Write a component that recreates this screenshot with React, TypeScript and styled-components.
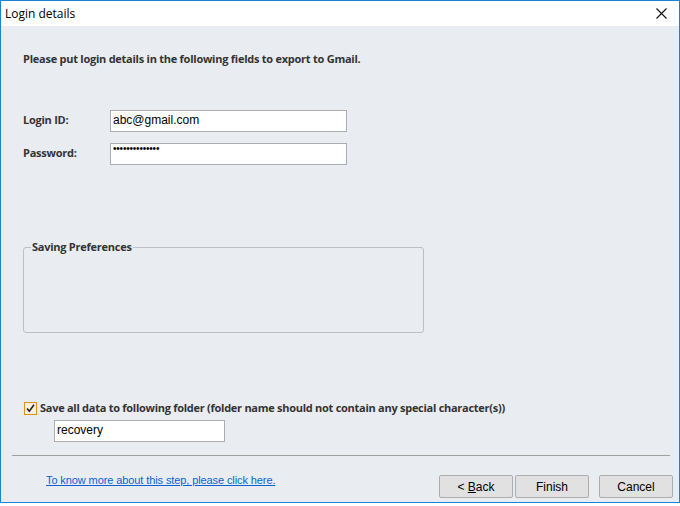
import React from "react";
import styled, { createGlobalStyle } from "styled-components";

const GlobalStyle = createGlobalStyle`
	html, body {
		margin: 0;
		padding: 0;
		background: #ffffff;
	}
	* {
		box-sizing: border-box;
	}
`;

const uiFont = `"Open Sans", "Noto Sans", sans-serif`;
const fieldFont = `"Liberation Sans", Arial, sans-serif`;

const Window = styled.div`
	width: 680px;
	height: 503px;
	border: 1px solid #1883d7;
	display: flex;
	flex-direction: column;
	background: #e9ecf1;
`;

const TitleBar = styled.div`
	height: 25px;
	flex-shrink: 0;
	background: #ffffff;
	display: flex;
	align-items: center;
	justify-content: space-between;
	padding: 0 11px 0 4px;
	font-family: ${uiFont};
	font-size: 12px;
	color: #000000;
`;

const CloseButton = styled.div`
	width: 14px;
	height: 14px;
	display: flex;
	align-items: center;
	justify-content: center;
`;

const Content = styled.div`
	flex: 1;
	display: flex;
	flex-direction: column;
	padding: 0 0 0 22px;
`;

const BoldText = styled.div`
	font-family: ${uiFont};
	font-weight: 700;
	font-size: 11px;
	letter-spacing: -0.25px;
	color: #333333;
`;

const Intro = styled(BoldText)`
	margin-top: 25px;
	line-height: 16px;
`;

const FieldList = styled.div`
	margin-top: 43px;
	display: flex;
	flex-direction: column;
	gap: 11px;
`;

const FieldRow = styled.div`
	display: flex;
	align-items: center;
	height: 22px;
`;

const Label = styled(BoldText)`
	width: 87px;
	margin-top: -3px;
`;

const TextBox = styled.div<{ $width: number }>`
	width: ${(p) => p.$width}px;
	height: 22px;
	background: #ffffff;
	border: 1px solid #abadb3;
	font-family: ${fieldFont};
	font-size: 12px;
	color: #000000;
	padding: 0 2px;
	line-height: 18px;
`;

const Dots = styled.span`
	font-size: 10px;
	letter-spacing: -0.2px;
	line-height: 10px;
	vertical-align: top;
`;

const GroupBox = styled.fieldset`
	margin: 75px 0 0 0;
	width: 401px;
	height: 93px;
	border: 1px solid #bcbfc4;
	border-radius: 3px;
	padding: 0 7px;
`;

const Legend = styled.legend`
	padding: 0 1px;
	line-height: 14px;
	font-family: ${uiFont};
	font-weight: 700;
	font-size: 11px;
	letter-spacing: -0.25px;
	color: #333333;
`;

const CheckRow = styled.label`
	margin-top: 67px;
	display: flex;
	align-items: center;
	gap: 3px;
	padding-left: 1px;
	font-family: ${uiFont};
	font-weight: 700;
	font-size: 11px;
	letter-spacing: -0.27px;
	color: #333333;
`;

const CheckBox = styled.span<{ $checked: boolean }>`
	width: 13px;
	height: 13px;
	border: 1px solid #e0901f;
	background: ${(p) => (p.$checked ? "#fdf1de" : "#ffffff")};
	display: flex;
	align-items: center;
	justify-content: center;
	margin-top: 1px;
`;

const FolderBox = styled(TextBox)`
	margin: 5px 0 0 31px;
`;

const Separator = styled.div`
	margin: 13px 9px 0 11px;
	height: 1px;
	background: #a0a0a0;
`;

const Footer = styled.div`
	display: flex;
	align-items: flex-start;
	padding: 18px 6px 0 45px;
	height: 46px;
`;

const HelpLink = styled.a`
	font-family: ${fieldFont};
	font-size: 11px;
	letter-spacing: -0.1px;
	color: #0a5fd6;
	text-decoration: underline;
	line-height: 13px;
	cursor: pointer;
`;

const ButtonGroup = styled.div`
	margin-left: auto;
	display: flex;
	gap: 2px;
	margin-top: 1px;
`;

const Button = styled.button<{ $gapBefore?: number }>`
	width: 74px;
	height: 23px;
	margin-left: ${(p) => p.$gapBefore ?? 0}px;
	border: 1px solid #adadad;
	border-radius: 2px;
	background: #e1e1e1;
	font-family: ${fieldFont};
	font-size: 12px;
	color: #000000;
	padding: 0;
`;

const CheckMark = () => (
	<svg width="9" height="9" viewBox="0 0 9 9">
		<path d="M1 4.5 L3.3 7.2 L8 0.8" fill="none" stroke="#222" strokeWidth="1.6" />
	</svg>
);

const CloseIcon = () => (
	<svg width="11" height="11" viewBox="0 0 11 11">
		<path d="M0.5 0.5 L10.5 10.5 M10.5 0.5 L0.5 10.5" stroke="#111" strokeWidth="1.1" />
	</svg>
);

export default function App() {
	return (
		<>
			<GlobalStyle />
			<Window>
				<TitleBar>
					<span>Login details</span>
					<CloseButton>
						<CloseIcon />
					</CloseButton>
				</TitleBar>
				<Content>
					<Intro>Please put login details in the following fields to export to Gmail.</Intro>
					<FieldList>
						<FieldRow>
							<Label>Login ID:</Label>
							<TextBox $width={237}>abc@gmail.com</TextBox>
						</FieldRow>
						<FieldRow>
							<Label>Password:</Label>
							<TextBox $width={237}>
								<Dots>••••••••••••••</Dots>
							</TextBox>
						</FieldRow>
					</FieldList>
					<GroupBox>
						<Legend>Saving Preferences</Legend>
					</GroupBox>
					<CheckRow>
						<CheckBox $checked>
							<CheckMark />
						</CheckBox>
						Save all data to following folder (folder name should not contain any special character(s))
					</CheckRow>
					<FolderBox $width={171}>recovery</FolderBox>
				</Content>
				<Separator />
				<Footer>
					<HelpLink>To know more about this step, please click here.</HelpLink>
					<ButtonGroup>
						<Button>
							&lt; <u>B</u>ack
						</Button>
						<Button>Finish</Button>
						<Button $gapBefore={8}>Cancel</Button>
					</ButtonGroup>
				</Footer>
			</Window>
		</>
	);
}
